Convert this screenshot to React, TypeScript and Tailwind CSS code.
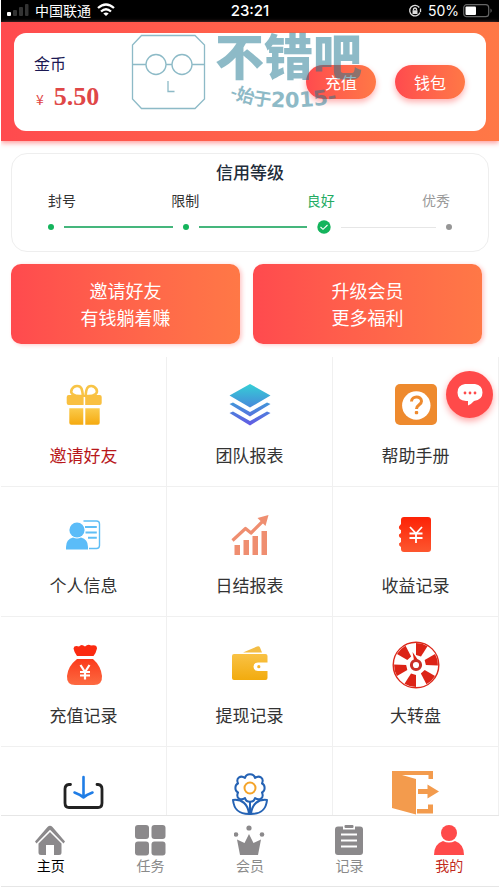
import React from "react";

const GiftIcon = () => (
  <svg viewBox="0 0 48 48" className="w-12 h-12">
    <defs>
      <linearGradient id="gift" x1="0" y1="0" x2="0" y2="1">
        <stop offset="0" stopColor="#fbcb4c" />
        <stop offset="1" stopColor="#f5aa10" />
      </linearGradient>
    </defs>
    <g fill="none" stroke="#f8c446" strokeWidth="2.600">
      <path d="M23 15C13 16 9.500 12 12 8C14 4 20 4 21.500 7.500C22.300 9.500 22.500 11 23 15" />
      <path d="M25.500 15C35 16 38.500 12 36.300 8C34 4 28.500 4 27 7.500C26 9.500 26 11 25.500 15" />
    </g>
    <path d="M8.700 14H39.700Q41.700 14 41.700 16V22Q41.700 24 39.700 24H25.200V16H23.600V24H8.700Q6.700 24 6.700 22V16Q6.700 14 8.700 14Z" fill="#f9c040" />
    <path d="M9.300 27.300H23.300V43.700H11.300Q9.300 43.700 9.300 41.700ZM25.300 27.300H39.700V41.700Q39.700 43.700 37.700 43.700H25.300Z" fill="url(#gift)" />
  </svg>
);

const LayersIcon = () => (
  <svg viewBox="0 0 48 48" className="w-12 h-12">
    <defs>
      <linearGradient id="layers" gradientUnits="userSpaceOnUse" x1="0" y1="3" x2="0" y2="45">
        <stop offset="0" stopColor="#35cfd6" />
        <stop offset="0.500" stopColor="#4590da" />
        <stop offset="1" stopColor="#6457e4" />
      </linearGradient>
    </defs>
    <path
      d="M24 3L44.500 14.500L24 26.500L3.500 14.500ZM3.500 23L7 21.500L24 31L41 21.500L44.500 23L24 35.500ZM3.500 32L7 30.500L24 40L41 30.500L44.500 32L24 44.500Z"
      fill="url(#layers)"
    />
  </svg>
);

const HelpIcon = () => (
  <svg viewBox="0 0 48 48" className="w-12 h-12">
    <rect x="3" y="3" width="42" height="41" rx="5" fill="#ee8a2e" />
    <circle cx="24.300" cy="24.500" r="14.200" fill="#fff" />
    <path d="M19.500 20.500C19.500 14.500 29.500 14.500 29.500 20.200C29.500 24 24.500 23.500 24.500 28" fill="none" stroke="#ee8a2e" strokeWidth="3" />
    <rect x="22.800" y="30" width="3.400" height="3.200" rx="1" fill="#ee8a2e" />
  </svg>
);

const ProfileIcon = () => (
  <svg viewBox="0 0 48 48" className="w-12 h-12">
    <path d="M23.500 10H36.500Q39.500 10 39.500 13V34.500Q39.500 37.500 36.500 37.500H29" fill="none" stroke="#5fbef5" strokeWidth="1.400" />
    <path d="M25 16H36.800M25.500 21.500H36.800M28 26.700H36.800" stroke="#5fbef5" strokeWidth="2" />
    <circle cx="17" cy="19" r="7.600" fill="#5bbcf8" />
    <path d="M6 38.500V36Q6 28 13 26.500Q17 28.500 21 26.500Q28 28 28 36V38.500Z" fill="#5bbcf8" />
  </svg>
);

const GrowthIcon = () => (
  <svg viewBox="0 0 48 48" className="w-12 h-12" fill="#ef8e70">
    <path d="M6.500 29.500L19.500 17.500L25 22L38 9" fill="none" stroke="#ef8e70" strokeWidth="3.200" strokeLinejoin="round" />
    <path d="M42.500 4L31.500 7L39.500 15Z" />
    <path d="M8.500 34H14V44H8.500ZM17.500 29H23V44H17.500ZM26.500 25H32V44H26.500ZM35.500 20H41V44H35.500Z" />
  </svg>
);

const BookIcon = () => (
  <svg viewBox="0 0 48 48" className="w-12 h-12">
    <defs>
      <linearGradient id="book" x1="0" y1="0" x2="0" y2="1">
        <stop offset="0" stopColor="#fd2206" />
        <stop offset="1" stopColor="#fd572f" />
      </linearGradient>
    </defs>
    <path
      d="M12 6H36Q39 6 39 9V38Q39 41 36 41H12Q9 41 9 38V36Q6.500 34.500 7 32.500L9 31V27Q6.500 26 7 23.500L9 22V19Q6.500 18 7 15.500L9 13V9Q9 6 12 6Z"
      fill="url(#book)"
    />
    <path d="M18 16L24 22.500L30 16M24 22V32M17.500 22.500H30.500M17.500 27H30.500" fill="none" stroke="#fff" strokeWidth="1.800" />
  </svg>
);

const MoneyBagIcon = () => (
  <svg viewBox="0 0 48 48" className="w-12 h-12">
    <defs>
      <linearGradient id="bag" x1="0" y1="0" x2="0" y2="1">
        <stop offset="0" stopColor="#fb3b1c" />
        <stop offset="1" stopColor="#fd6a41" />
      </linearGradient>
    </defs>
    <path d="M17 15Q14 11 13.500 7.500Q14 4 19 5.500Q21.500 2.500 25 5.500Q28 2.500 31 4.500Q37 3 37 7.500Q36 12 33.500 15Z" fill="#fb2a10" />
    <path d="M17 18H33Q41 25 42 35Q42.500 44 34 44H15Q6.500 44 7 35Q8 25 17 18Z" fill="url(#bag)" />
    <path d="M20.500 24L25 31L29.500 24M25 31V38.500M20 31H30M20 34.500H30" fill="none" stroke="#fff" strokeWidth="2.200" />
  </svg>
);

const WalletIcon = () => (
  <svg viewBox="0 0 48 48" className="w-12 h-12">
    <defs>
      <linearGradient id="wallet" x1="0" y1="0" x2="0" y2="1">
        <stop offset="0" stopColor="#f9c245" />
        <stop offset="1" stopColor="#f2ab0e" />
      </linearGradient>
    </defs>
    <path d="M17 11.500L31 5.500Q33 4.500 34 6.500L36 11.500Z" fill="#f3bd45" />
    <path
      d="M8 13H39.500Q41.500 13 41.500 15V21.500H32Q27.500 21.500 27.500 25.700Q27.500 30 32 30H41.500V37Q41.500 39 39.500 39H8Q6 39 6 37V15Q6 13 8 13Z"
      fill="url(#wallet)"
    />
    <circle cx="32.800" cy="25.700" r="1.600" fill="#f5b52a" />
  </svg>
);

const WheelIcon = () => (
  <svg viewBox="0 0 48 48" className="w-12 h-12">
    <circle cx="24" cy="24" r="22.800" fill="#fff" stroke="#dc2a1c" strokeWidth="1.400" />
    {[0, 60, 120, 180, 240, 300].map((deg) => (
      <path key={deg} d="M24 14V2A22 22 0 0 1 35.500 5.300L29 15.500Z" fill="#dc2316" transform={`rotate(${deg} 24 24)`} />
    ))}
    <circle cx="24" cy="24" r="7.500" fill="#fff" />
    <path d="M20.500 11L26 19H22Z" fill="#dc2316" />
    <circle cx="24" cy="24" r="4.600" fill="#fff" stroke="#c93026" strokeWidth="3" />
  </svg>
);

const DownloadIcon = () => (
  <svg viewBox="0 0 48 48" className="w-12 h-12" fill="none" strokeLinecap="round" strokeLinejoin="round">
    <path d="M10.500 13.500H9Q5 14 5 18V32Q5 36.500 9 36.500H38Q42 36.500 42 32V18Q42 14 38 13.500H37" stroke="#222" strokeWidth="2.800" />
    <path d="M23.500 6V26M14.500 21.500Q20 23.500 23.500 26.500Q27 23.500 32.500 21.500" stroke="#1f7de6" strokeWidth="2.600" />
  </svg>
);

const FlowerIcon = () => (
  <svg viewBox="0 0 48 48" className="w-12 h-12" fill="none" stroke="#2462b4" strokeWidth="2" strokeLinejoin="round">
    <path d="M19 7C20 2 28 2 29 7C33 4 38.500 6.500 36 12.500C39.500 14 39.500 20 36 21.500C38.500 27.500 33 30 29 27C28 32 20 32 19 27C15 30 9.500 27.500 12 21.500C8.500 20 8.500 14 12 12.500C9.500 6.500 15 4 19 7Z" />
    <circle cx="24" cy="17" r="5.500" stroke="#f4a328" />
    <path d="M24 31V48" />
    <path d="M7 29C16 28 22 33 23 43C13 43 8 39 7 29Z" />
    <path d="M41 29C32 28 26 33 25 43C35 43 40 39 41 29Z" />
  </svg>
);

const ExitIcon = () => (
  <svg viewBox="0 0 48 48" className="w-12 h-12" fill="#f39b4d">
    <path d="M0 -1H41V8H36.500V4H10L24 8V43.500L0 37ZM25 38H36V33.500H41V42.500H25ZM26 18H35.500V13.500L47 20.500L35.500 27.500V23H26Z" />
  </svg>
);

const menus = [
  { name: "邀请好友", icon: <GiftIcon />, active: true },
  { name: "团队报表", icon: <LayersIcon /> },
  { name: "帮助手册", icon: <HelpIcon /> },
  { name: "个人信息", icon: <ProfileIcon /> },
  { name: "日结报表", icon: <GrowthIcon /> },
  { name: "收益记录", icon: <BookIcon /> },
  { name: "充值记录", icon: <MoneyBagIcon /> },
  { name: "提现记录", icon: <WalletIcon /> },
  { name: "大转盘", icon: <WheelIcon /> },
];

const moreMenus = [
  { name: "下载", icon: <DownloadIcon /> },
  { name: "活动", icon: <FlowerIcon /> },
  { name: "退出", icon: <ExitIcon /> },
];

const tabs = [
  {
    name: "主页",
    color: "text-black",
    icon: (
      <>
        <path d="M0 16.500L12.500 2Q15 -0.500 17.500 2L30 16.500L28.500 18.500L15 4.800L1.500 18.500Z" />
        <path d="M15 7L26.500 18.500V27.500Q26.500 30 24 30H19V20H11V30H6Q3.500 30 3.500 27.500V18.500Z" />
      </>
    ),
  },
  {
    name: "任务",
    color: "text-[#8a8a8a]",
    icon: (
      <>
        <rect x="0" y="0" width="14" height="14" rx="3" />
        <rect x="16.500" y="0" width="14" height="14" rx="3" />
        <rect x="0" y="16.500" width="14" height="14" rx="3" />
        <rect x="16.500" y="16.500" width="14" height="14" rx="3" />
      </>
    ),
  },
  {
    name: "会员",
    color: "text-[#8a8a8a]",
    icon: (
      <>
        <circle cx="2" cy="9.500" r="2.300" />
        <circle cx="15" cy="3" r="2.600" />
        <circle cx="28" cy="9.500" r="2.300" />
        <path d="M3 14.500L10.500 18L15 9L19.500 18L27 14.500L24 30H6Z" />
      </>
    ),
  },
  {
    name: "记录",
    color: "text-[#8a8a8a]",
    icon: (
      <>
        <path d="M3 1.500H9V4.500H21V1.500H26Q29 1.500 29 4.500V27Q29 30 26 30H4Q1 30 1 27V4.500Q1 1.500 4 1.500Z" />
        <rect x="10.500" y="0" width="9" height="3" rx="1" />
        <path d="M7 9.500H23M7 15.500H23M7 21.500H23" stroke="#fff" strokeWidth="1.800" />
      </>
    ),
  },
  {
    name: "我的",
    color: "text-[#c22a20]",
    red: true,
    icon: (
      <>
        <circle cx="15" cy="8" r="8" />
        <path d="M0 30Q0 19 9 16Q15 19 21 16Q30 19 30 30Z" />
      </>
    ),
  },
];

const StatusBar = () => (
  <div className="grid grid-cols-3 items-center h-[22px] px-1.5 bg-black text-white">
    <div className="flex items-center text-sm leading-5 pb-0.5">
      <svg viewBox="0 0 22 14" className="w-[22px] h-3.5 mr-1.5">
        <rect x="0" y="9" width="4" height="4" rx="1" fill="#fff" />
        <rect x="6" y="7" width="4" height="6" rx="1" fill="#333" />
        <rect x="12" y="4" width="4" height="9" rx="1" fill="#333" />
        <rect x="18" y="1" width="3.500" height="12" rx="1" fill="#333" />
      </svg>
      中国联通
      <svg viewBox="0 0 18 14" className="w-[18px] h-3.5 ml-1.5" fill="none" stroke="#fff" strokeWidth="2.300">
        <path d="M1 5Q9 -2 17 5M4 8.500Q9 4 14 8.500" />
        <path d="M9 13L6.300 10.500Q9 8.500 11.700 10.500Z" fill="#fff" stroke="none" />
      </svg>
    </div>
    <div className="text-center text-[15px] leading-5 font-medium font-['Inter',sans-serif]">23:21</div>
    <div className="flex items-center justify-end">
      <svg viewBox="0 0 14 14" className="w-3.5 h-3.5 mr-1.5" fill="none" stroke="#ddd" strokeWidth="1.300">
        <path d="M12 8.500A5.300 5.300 0 1 1 11.300 3.500M12.500 4.500V8" />
        <rect x="4.500" y="6.300" width="5" height="3.700" fill="#ddd" stroke="none" />
        <path d="M5.500 6.500V5Q7 3 8.500 5V6.500" />
      </svg>
      <span className="text-sm leading-5 font-['Inter',sans-serif]">50%</span>
      <svg viewBox="0 0 30 14" className="w-[30px] h-3.5 ml-1">
        <rect x="0.700" y="0.700" width="25" height="12" rx="3" fill="none" stroke="#666" strokeWidth="1.200" />
        <rect x="2.500" y="2.500" width="10.500" height="8.500" rx="1" fill="#fff" />
        <path d="M27.500 4.500Q30 6.700 27.500 9Z" fill="#666" />
      </svg>
    </div>
  </div>
);

const Watermark = () => (
  <div className="absolute left-[117px] top-0 pointer-events-none opacity-50">
    <svg viewBox="0 0 240 90" className="w-60 h-[90px] overflow-visible" fill="#1d7891">
      <g fill="none" stroke="#1d7891" strokeWidth="1.300">
        <path d="M10.500 2.500H64L73.500 12V66L64 75.500H10.500L1.500 66V12Z" />
        <circle cx="25" cy="31.500" r="10" />
        <circle cx="51" cy="31.500" r="10" />
        <path d="M1.500 31.500H15M35 31.500H41M61 31.500H73.500M37 48V58.500H43.500" />
      </g>
      <path id="arc" d="M98 64Q155 86 236 62" fill="none" />
      <text x="84" y="42" fontSize="49" fontWeight="900">
        不错吧
      </text>
      <text fontSize="18" fontWeight="700">
        <textPath href="#arc">
          -始于
          <tspan fontFamily="DejaVu Sans" fontSize="21">
            2015-
          </tspan>
        </textPath>
      </text>
    </svg>
  </div>
);

const Balance = () => (
  <div className="px-[13px] pt-[11px] pb-2.5 bg-linear-to-r from-[#ff4a4e] to-[#ff7846] shadow-[0_2px_5px_#ff9c9c]">
    <div className="relative flex items-center justify-between h-[98px] pl-5 pr-[21px] rounded-xl bg-white">
      <div>
        <p className="text-base leading-6 text-[#1b1853]">金币</p>
        <p className="flex items-baseline gap-2.5 mt-2 pl-0.5 text-[#df4747]">
          <span className="text-sm leading-7">¥</span>
          <span className="text-[26px] leading-7 font-bold font-['Liberation_Serif',serif]">5.50</span>
        </p>
      </div>
      <div className="flex gap-[19px] text-base text-white">
        <button className="w-[70px] h-[34px] rounded-full bg-linear-to-r from-[#ff4a4e] to-[#ff7846] shadow-[0_3px_6px_#ffb0b0]">
          充值
        </button>
        <button className="w-[70px] h-[34px] rounded-full bg-linear-to-r from-[#ff4a4e] to-[#ff7846] shadow-[0_3px_6px_#ffb0b0]">
          钱包
        </button>
      </div>
      <Watermark />
    </div>
  </div>
);

const Credit = () => (
  <div className="mt-3 mx-2.5 h-[99px] px-9 pt-1.5 border border-[#eeeeee] rounded-2xl">
    <h2 className="text-center text-[17px] leading-6 font-medium text-[#1f2d3a]">信用等级</h2>
    <div className="grid grid-cols-[123fr_135fr_115fr_30px] mt-1.5 text-sm leading-5 text-[#333]">
      <span>封号</span>
      <span>限制</span>
      <span className="text-[#22ab62]">良好</span>
      <span className="text-[#999]">优秀</span>
    </div>
    <div className="flex items-center gap-2.5 mt-2.5">
      <i className="w-1.5 h-1.5 rounded-full bg-[#14b45c]" />
      <i className="flex-[109] h-0.5 bg-[#45b67c]" />
      <i className="w-1.5 h-1.5 rounded-full bg-[#14b45c]" />
      <i className="flex-[109] h-0.5 bg-[#45b67c]" />
      <svg viewBox="0 0 14 14" className="w-3.5 h-3.5">
        <circle cx="7" cy="7" r="6.700" fill="#14b45c" />
        <path d="M3.500 7L6 9.300L10.500 5" fill="none" stroke="#fff" strokeWidth="1.100" />
      </svg>
      <i className="flex-[95] h-px bg-[#e6e6e6]" />
      <i className="w-1.5 h-1.5 rounded-full bg-[#969696]" />
    </div>
  </div>
);

const Tabs = () => (
  <nav className="grid grid-cols-5 h-[72px] shrink-0 mb-1.5 border-y border-[#e6e6e6] bg-white">
    {tabs.map((tab) => (
      <a key={tab.name} href="#" className={`flex flex-col items-center pt-[9px] text-sm leading-[18px] ${tab.color}`}>
        <svg viewBox="0 0 31 31" className="w-[31px] h-[31px]" fill={tab.red ? "#ff4a4a" : "#8b898b"}>
          {tab.icon}
        </svg>
        {tab.name}
      </a>
    ))}
  </nav>
);

const App: React.FC = () => {
  return (
    <div className="relative flex flex-col h-screen px-px bg-white font-['Noto_Sans_CJK_SC',sans-serif]">
      <main className="flex-1 min-h-0 overflow-y-auto [scrollbar-width:none]">
        <StatusBar />
        <Balance />
        <Credit />
        <div className="grid grid-cols-2 gap-[13px] mt-3 pl-2.5 pr-[17px] text-lg leading-[27px] text-white">
          <button className="py-[13px] rounded-[10px] bg-linear-to-r from-[#ff4a4e] to-[#ff7846] shadow-[2px_1px_4px_#ffc9c9]">
            邀请好友
            <br />
            有钱躺着赚
          </button>
          <button className="py-[13px] rounded-[10px] bg-linear-to-r from-[#ff4a4e] to-[#ff7846] shadow-[2px_1px_4px_#ffc9c9]">
            升级会员
            <br />
            更多福利
          </button>
        </div>
        <div className="grid grid-cols-3 mt-[13px] text-[17px] leading-[26px] text-[#333]">
          {menus.map((item) => (
            <a
              key={item.name}
              href="#"
              className={`flex flex-col items-center gap-[13px] h-[130px] pt-6 border-r border-b border-[#f0f0f0] ${
                item.active ? "text-[#b8181b]" : ""
              }`}
            >
              {item.icon}
              {item.name}
            </a>
          ))}
          {moreMenus.map((item) => (
            <a
              key={item.name}
              href="#"
              aria-label={item.name}
              className="flex flex-col items-center h-[130px] pt-6 border-r border-b border-[#f0f0f0]"
            >
              {item.icon}
            </a>
          ))}
        </div>
      </main>
      <Tabs />
      <button
        aria-label="客服"
        className="absolute right-[7px] top-[371px] flex items-center justify-center w-[47px] h-[47px] rounded-full bg-[#ff4a4a] shadow-[0_3px_7px_#ffa5a5]"
      >
        <svg viewBox="0 0 26 24" className="w-[26px] h-6">
          <path d="M8 1H18Q25.500 2 25.500 9.500Q25.500 17 17 18Q14 21.500 11 22.500V18H9Q0.500 17.500 0.500 9.500Q0.500 2 8 1Z" fill="#fff" />
          <circle cx="8" cy="10" r="1.400" fill="#ff4a4a" />
          <circle cx="13" cy="10" r="1.400" fill="#ff4a4a" />
          <circle cx="18" cy="10" r="1.400" fill="#ff4a4a" />
        </svg>
      </button>
    </div>
  );
};

export default App;
